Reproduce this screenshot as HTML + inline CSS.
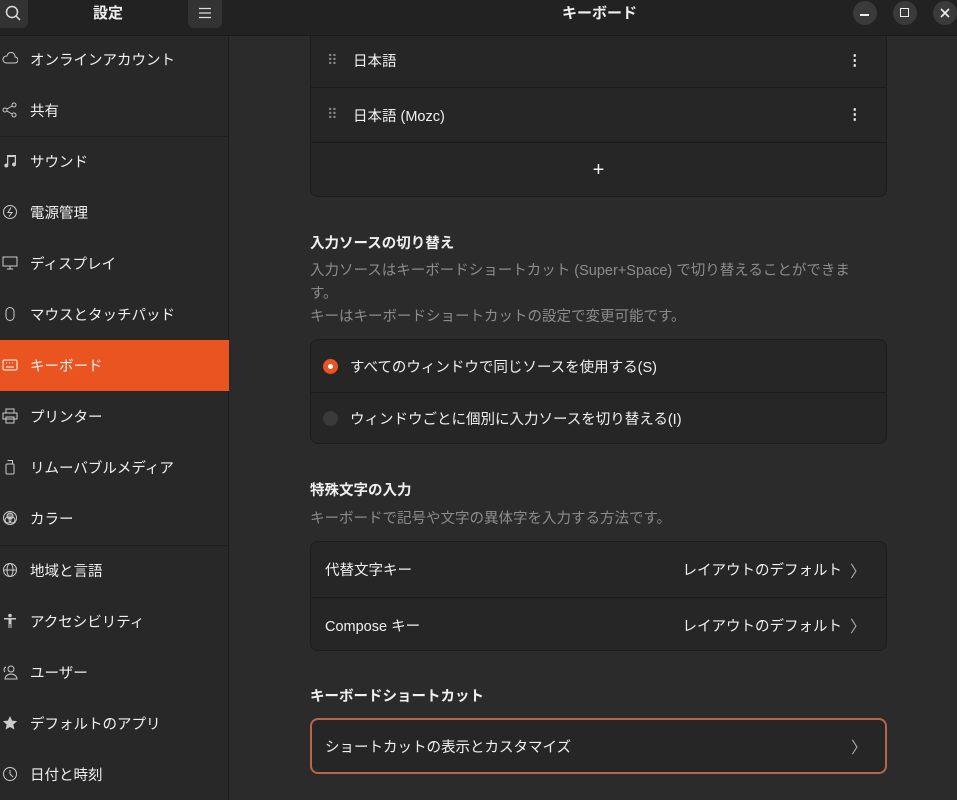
<!DOCTYPE html>
<html><head><meta charset="utf-8"><style>
*{margin:0;padding:0;box-sizing:border-box}
body{width:957px;height:800px;overflow:hidden;background:#2b2b2b;font-family:"Liberation Sans","Noto Sans CJK JP",sans-serif;color:#f0f0f0;font-size:14.5px;position:relative}
.hdr{position:absolute;top:0;left:0;width:957px;height:36px;background:#222;border-bottom:1px solid #1a1a1a;z-index:5}
.side{position:absolute;top:36px;left:0;width:229px;height:764px;background:#282828;border-right:1px solid #1c1c1c}
.item{position:absolute;left:0;width:229px;height:51px;display:flex;align-items:center}
.item span{position:absolute;left:30px}
.item svg{position:absolute;left:2px;top:17px}
.sel{background:#e95420}
.sep{position:absolute;left:0;width:229px;height:1px;background:#1f1f1f}
.card{position:absolute;left:310px;width:577px;background:#262626;border:1px solid #1d1d1d;border-radius:8px;overflow:hidden}
.row{position:absolute;left:0;width:100%;border-top:1px solid #1b1b1b;display:flex;align-items:center}
.h{position:absolute;left:310px;font-weight:bold;font-size:14.5px}
.d{position:absolute;left:310px;color:#8c8c8c;font-size:14.5px}
.btn{position:absolute;top:0;width:34px;height:28px;background:#333;border-radius:0 0 6px 6px}
.wc{position:absolute;top:1px;width:24px;height:24px;border-radius:50%;background:#3a3a3a}
.chev{position:absolute;right:20px;color:#aaa;font-size:16px}
</style></head><body>
<div class="hdr">
 <div class="btn" style="left:-6px;border-radius:0 0 6px 0"><svg width="20" height="20" style="position:absolute;left:9px;top:3px" fill="none" stroke="#ddd" stroke-width="1.5"><circle cx="9" cy="9" r="5.5"/><path d="M13 13l4 4"/></svg></div>
 <div style="position:absolute;left:93px;top:2px;font-weight:bold;font-size:15px">設定</div>
 <div class="btn" style="left:188px;width:34px"><svg width="14" height="12" style="position:absolute;left:10px;top:7px" stroke="#ddd" stroke-width="1.2"><path d="M1 1.5h12M1 6h12M1 10.5h12"/></svg></div>
 <div style="position:absolute;left:562px;top:2px;font-weight:bold;font-size:15px">キーボード</div>
 <div class="wc" style="left:853px"><div style="position:absolute;left:7px;top:13px;width:9px;height:1.5px;background:#eee"></div></div>
 <div class="wc" style="left:893px"><div style="position:absolute;left:7px;top:7px;width:9px;height:9px;border:1.5px solid #eee"></div></div>
 <div class="wc" style="left:933px"><svg width="24" height="24" stroke="#eee" stroke-width="1.6"><path d="M8 8l8 8M16 8l-8 8"/></svg></div>
</div>
<div class="side">
 <div class="item" style="top:-2px"><svg width="16" height="16" fill="none" stroke="#ccc"><path d="M4 12h9a3 3 0 0 0 0-6 4 4 0 0 0-8-1 3.5 3.5 0 0 0-1 7z"/></svg><span>オンラインアカウント</span></div>
 <div class="item" style="top:49px"><svg width="16" height="16" fill="none" stroke="#ccc"><circle cx="3" cy="8" r="2"/><circle cx="12" cy="3" r="2"/><circle cx="12" cy="13" r="2"/><path d="M5 7l5-3M5 9l5 3"/></svg><span>共有</span></div>
 <div class="sep" style="top:100px"></div>
 <div class="item" style="top:100px"><svg width="16" height="16" fill="#ccc"><path d="M5 2h9v9.5a2 2 0 1 1-1.3-1.9V4H6.3v8.5A2 2 0 1 1 5 10.6z"/></svg><span>サウンド</span></div>
 <div class="item" style="top:151px"><svg width="16" height="16" fill="none" stroke="#ccc"><circle cx="8" cy="8" r="6.5"/><path d="M9 3.5L6 8.5h4L7 12.5" /></svg><span>電源管理</span></div>
 <div class="item" style="top:202px"><svg width="16" height="16" fill="none" stroke="#ccc"><rect x="1" y="2" width="14" height="9"/><path d="M5 14h6M8 11v3"/></svg><span>ディスプレイ</span></div>
 <div class="item" style="top:253px"><svg width="16" height="16" fill="none" stroke="#ccc"><rect x="4" y="1.5" width="8" height="13" rx="4"/></svg><span>マウスとタッチパッド</span></div>
 <div class="item sel" style="top:304px"><svg width="16" height="16" fill="none" stroke="#fff"><rect x="1" y="3" width="14" height="10" rx="1.5"/><path d="M4 10h8M4 6h1M7 6h1M10 6h1" /></svg><span>キーボード</span></div>
 <div class="item" style="top:355px"><svg width="16" height="16" fill="none" stroke="#ccc"><rect x="1" y="5" width="14" height="6"/><rect x="4" y="1" width="8" height="4"/><rect x="4" y="9" width="8" height="6"/></svg><span>プリンター</span></div>
 <div class="item" style="top:406px"><svg width="16" height="16" fill="none" stroke="#ccc"><rect x="4" y="5" width="8" height="10" rx="1"/><path d="M5.5 1.5h5v3.5"/></svg><span>リムーバブルメディア</span></div>
 <div class="item" style="top:457px"><svg width="16" height="16" fill="none" stroke="#ccc"><circle cx="8" cy="8" r="6.5"/><circle cx="8" cy="6" r="3" fill="#777"/><circle cx="6" cy="10" r="3"/><circle cx="10" cy="10" r="3"/></svg><span>カラー</span></div>
 <div class="sep" style="top:509px"></div>
 <div class="item" style="top:509px"><svg width="16" height="16" fill="none" stroke="#ccc"><circle cx="8" cy="8" r="6.5"/><ellipse cx="8" cy="8" rx="3" ry="6.5"/><path d="M1.5 8h13"/></svg><span>地域と言語</span></div>
 <div class="item" style="top:560px"><svg width="16" height="16" fill="#ccc"><circle cx="8" cy="2.5" r="1.8"/><path d="M2 5h12v1.5H9.5V15H8.5v-4h-1v4H6.5V6.5H2z"/></svg><span>アクセシビリティ</span></div>
 <div class="item" style="top:611px"><svg width="16" height="16" fill="none" stroke="#ccc"><circle cx="9" cy="5" r="3"/><path d="M3 15a6 5 0 0 1 12 0zM4 3a3 3 0 0 0-1 5"/></svg><span>ユーザー</span></div>
 <div class="item" style="top:662px"><svg width="16" height="16" fill="#ccc"><path d="M8 1l2.1 4.6 5 .5-3.8 3.4 1.1 5L8 12l-4.4 2.5 1.1-5L.9 6.1l5-.5z"/></svg><span>デフォルトのアプリ</span></div>
 <div class="item" style="top:713px"><svg width="16" height="16" fill="none" stroke="#ccc"><circle cx="8" cy="8" r="6.5"/><path d="M8 4v4l3 3"/></svg><span>日付と時刻</span></div>
</div>

<div class="card" style="top:20px;height:177px">
 <div class="row" style="top:12px;height:55px;border-top:none"><span style="position:absolute;left:16px;color:#888;letter-spacing:-1px">⠿</span><span style="position:absolute;left:42px">日本語</span><span style="position:absolute;right:24px;font-weight:bold">⋮</span></div>
 <div class="row" style="top:66px;height:55px"><span style="position:absolute;left:16px;color:#888">⠿</span><span style="position:absolute;left:42px">日本語 (Mozc)</span><span style="position:absolute;right:24px;font-weight:bold">⋮</span></div>
 <div class="row" style="top:121px;height:55px;justify-content:center;font-size:20px;font-weight:300">+</div>
</div>

<div class="h" style="top:232px">入力ソースの切り替え</div>
<div class="d" style="top:260px;width:560px;line-height:23px">入力ソースはキーボードショートカット (Super+Space) で切り替えることができます。<br>キーはキーボードショートカットの設定で変更可能です。</div>

<div class="card" style="top:339px;height:105px">
 <div class="row" style="top:0;height:52px;border-top:none"><span style="position:absolute;left:12px;width:15px;height:15px;border-radius:50%;background:#e95420"><span style="position:absolute;left:5px;top:5px;width:5px;height:5px;border-radius:50%;background:#fff"></span></span><span style="position:absolute;left:39px">すべてのウィンドウで同じソースを使用する(S)</span></div>
 <div class="row" style="top:52px;height:52px"><span style="position:absolute;left:12px;width:15px;height:15px;border-radius:50%;background:#3a3a3a"></span><span style="position:absolute;left:39px">ウィンドウごとに個別に入力ソースを切り替える(I)</span></div>
</div>

<div class="h" style="top:479px">特殊文字の入力</div>
<div class="d" style="top:507px">キーボードで記号や文字の異体字を入力する方法です。</div>

<div class="card" style="top:541px;height:110px">
 <div class="row" style="top:0;height:55px;border-top:none"><span style="position:absolute;left:14px">代替文字キー</span><span style="position:absolute;right:44px">レイアウトのデフォルト</span><span class="chev">〉</span></div>
 <div class="row" style="top:55px;height:55px"><span style="position:absolute;left:14px">Compose キー</span><span style="position:absolute;right:44px">レイアウトのデフォルト</span><span class="chev">〉</span></div>
</div>

<div class="h" style="top:685px">キーボードショートカット</div>
<div class="card" style="top:718px;height:56px;border:2px solid #b8664a">
 <div class="row" style="top:0;height:52px;border-top:none"><span style="position:absolute;left:13px">ショートカットの表示とカスタマイズ</span><span class="chev" style="right:18px">〉</span></div>
</div>
</body></html>
